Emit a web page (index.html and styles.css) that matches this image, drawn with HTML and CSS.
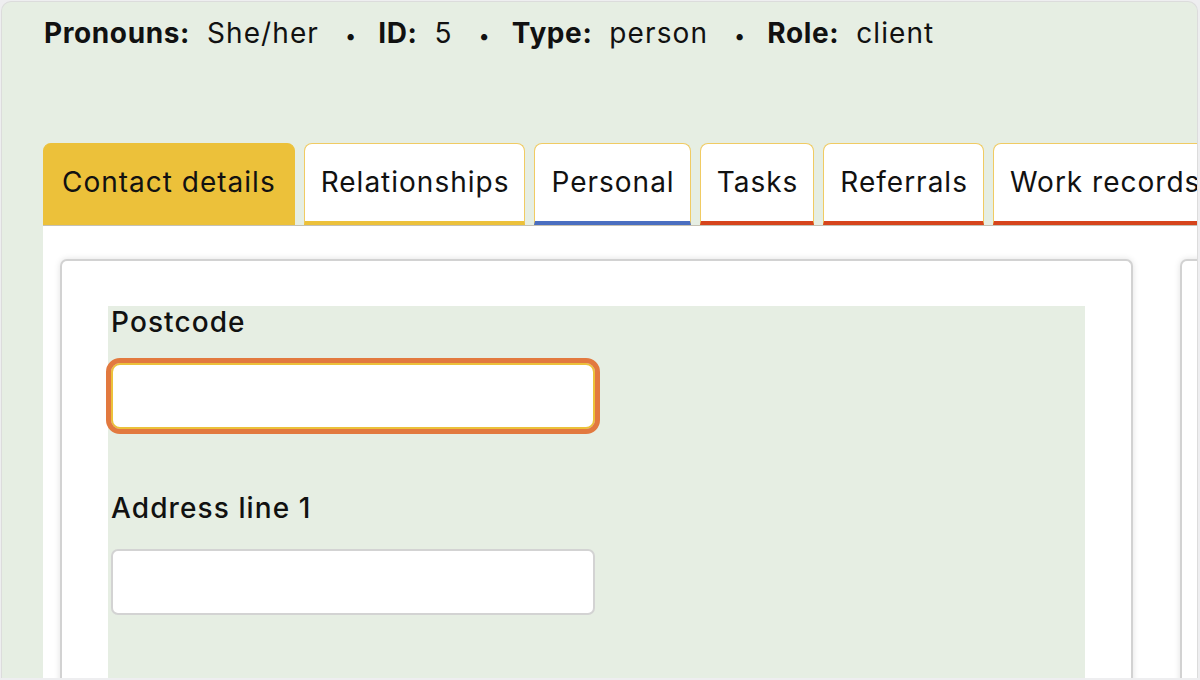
FILE: index.html
```html
<!DOCTYPE html>
<html lang="en">
<head>
<meta charset="utf-8">
<title>Contact details</title>
<link rel="stylesheet" href="styles.css">
</head>
<body>
<div class="window">
  <div class="meta">
    <span class="item"><b>Pronouns:</b><span class="val">She/her</span></span>
    <span class="sep">•</span>
    <span class="item"><b>ID:</b><span class="val">5</span></span>
    <span class="sep">•</span>
    <span class="item"><b>Type:</b><span class="val">person</span></span>
    <span class="sep">•</span>
    <span class="item"><b>Role:</b><span class="val">client</span></span>
  </div>

  <div class="tabs">
    <div class="tab active">Contact details</div>
    <div class="tab yellow">Relationships</div>
    <div class="tab blue">Personal</div>
    <div class="tab red">Tasks</div>
    <div class="tab red">Referrals</div>
    <div class="tab red">Work records</div>
  </div>

  <div class="panel">
    <div class="card main">
      <div class="form">
        <div class="field">
          <label class="label">Postcode</label>
          <div class="input focused"></div>
        </div>
        <div class="field">
          <label class="label">Address line 1</label>
          <div class="input"></div>
        </div>
      </div>
    </div>
    <div class="card side"></div>
  </div>
</div>
</body>
</html>
```

FILE: styles.css
```css
* { box-sizing: border-box; }
html, body { margin: 0; padding: 0; }
body {
  background: #eeeef0;
  font-family: Inter, "Noto Sans", sans-serif;
  color: #111;
  width: 1200px;
  height: 680px;
  overflow: hidden;
}
.window {
  margin: 1px 2px 0 1px;
  height: 677px;
  background: #e6eee3;
  border: 1px solid #dcdcdc;
  border-bottom: none;
  border-radius: 10px 10px 0 0;
  overflow: hidden;
}
.meta {
  display: flex;
  align-items: baseline;
  padding: 12px 0 0 42px;
  font-size: 28px;
  line-height: 38px;
  white-space: nowrap;
}
.meta b { font-weight: 700; letter-spacing: 0.6px; }
.meta .val { margin-left: 17px; font-weight: 400; letter-spacing: 1.1px; }
.meta .sep { margin: 0 22px 0 26px; font-size: 20px; }

.tabs {
  display: flex;
  gap: 9px;
  margin-top: 88px;
  padding-left: 41px;
  white-space: nowrap;
}
.tab {
  flex: none;
  height: 82px;
  padding: 0 15px 2px 16px;
  display: flex;
  align-items: center;
  font-size: 28px;
  letter-spacing: 1px;
  background: #fff;
  border: 1px solid #f0cb63;
  border-bottom: 4px solid #ecc13a;
  border-radius: 8px 8px 0 0;
}
.tab.active { background: #ecc13a; border-color: #ecc13a; padding: 0 18px 2px 18px; }
.tab.yellow { border-bottom-color: #ecc13a; }
.tab.blue { border-bottom-color: #4a6ec0; }
.tab.red { border-bottom-color: #d6441c; }

.panel {
  margin-left: 41px;
  height: 500px;
  background: #fff;
  border-top: 1px solid #c5c1b4;
  display: flex;
  gap: 47px;
  padding: 33px 0 0 17px;
}
.card {
  flex: none;
  height: 460px;
  background: #fff;
  border: 2px solid #d2d2d2;
  border-bottom: none;
  border-radius: 7px 7px 0 0;
  box-shadow: 0 0 6px rgba(0, 0, 0, 0.12);
}
.card.main { width: 1073px; padding: 45px 46px 0 46px; }
.card.side { width: 60px; }

.form {
  background: #e6eee3;
  height: 420px;
  padding: 0 3px;
}
.field { display: flex; flex-direction: column; align-items: flex-start; margin-bottom: 63px; }
.label {
  font-size: 28px;
  font-weight: 500;
  line-height: 32px;
  letter-spacing: 1.1px;
}
.input {
  margin-top: 25px;
  width: 484px;
  height: 66px;
  background: #fff;
  border: 2px solid #d3d3d3;
  border-radius: 7px;
}
.input.focused {
  border: 2px solid #ecc13a;
  outline: 5px solid #e2793f;
  outline-offset: 0;
  border-radius: 9px;
}
```
